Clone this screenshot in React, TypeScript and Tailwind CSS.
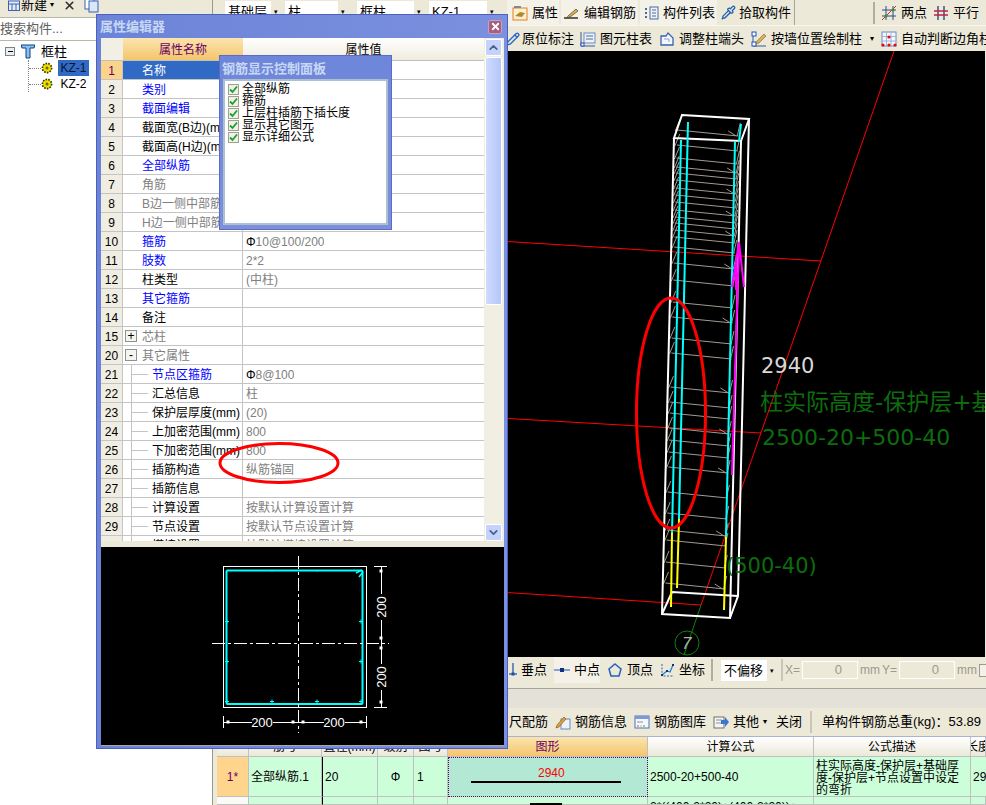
import React from "react";
import { ChevronDown, ChevronUp, Pipette, Pencil, X } from "lucide-react";

type Prop = {
  no: number;
  name: string;
  value?: string;
  tone?: "blue" | "black" | "gray";
  toggle?: "+" | "-";
  nested?: boolean;
};

const props: Prop[] = [
  { no: 1, name: "名称", tone: "black" },
  { no: 2, name: "类别", tone: "blue" },
  { no: 3, name: "截面编辑", tone: "blue" },
  { no: 4, name: "截面宽(B边)(mm)" },
  { no: 5, name: "截面高(H边)(mm)" },
  { no: 6, name: "全部纵筋", tone: "blue" },
  { no: 7, name: "角筋", tone: "gray" },
  { no: 8, name: "B边一侧中部筋", tone: "gray" },
  { no: 9, name: "H边一侧中部筋", tone: "gray" },
  { no: 10, name: "箍筋", tone: "blue", value: "Φ10@100/200" },
  { no: 11, name: "肢数", tone: "blue", value: "2*2" },
  { no: 12, name: "柱类型", value: "(中柱)" },
  { no: 13, name: "其它箍筋", tone: "blue" },
  { no: 14, name: "备注" },
  { no: 15, name: "芯柱", tone: "gray", toggle: "+" },
  { no: 20, name: "其它属性", tone: "gray", toggle: "-" },
  { no: 21, name: "节点区箍筋", tone: "blue", value: "Φ8@100", nested: true },
  { no: 22, name: "汇总信息", value: "柱", nested: true },
  { no: 23, name: "保护层厚度(mm)", value: "(20)", nested: true },
  { no: 24, name: "上加密范围(mm)", value: "800", nested: true },
  { no: 25, name: "下加密范围(mm)", value: "800", nested: true },
  { no: 26, name: "插筋构造", value: "纵筋锚固", nested: true },
  { no: 27, name: "插筋信息", nested: true },
  { no: 28, name: "计算设置", value: "按默认计算设置计算", nested: true },
  { no: 29, name: "节点设置", value: "按默认节点设置计算", nested: true },
  { no: 30, name: "搭接设置", value: "按默认搭接设置计算", nested: true },
];

const checks = ["全部纵筋", "箍筋", "上层柱插筋下插长度", "显示其它图元", "显示详细公式"];

const stirrups = [
  130, 145, 158, 167, 173, 180, 188, 195, 202, 210, 217, 223, 230, 237, 247, 263, 280,
  302, 317, 338, 353, 387, 402, 413, 428, 440, 452, 467, 492, 513, 530, 540, 562, 583,
];

const toneClass = { blue: "text-[#0000ff]", black: "text-black", gray: "text-[#808080]" };

function Gear({ className }: { className: string }) {
  return (
    <svg viewBox="0 0 12 12" className={className}>
      <circle cx="6" cy="6" r="4.6" fill="#e8e000" stroke="#303000" strokeWidth="1.6" strokeDasharray="1.6 1.2" />
      <circle cx="6" cy="6" r="1.5" fill="#806000" />
    </svg>
  );
}

// little toolbar drawings, all 16px
function Glyph({ kind }: { kind: string }) {
  const c = "h-4 w-4 shrink-0";
  switch (kind) {
    case "props":
      return (
        <svg viewBox="0 0 16 16" className={c}>
          <rect x="1" y="3" width="14" height="12" fill="#fdf0d0" stroke="#e08020" />
          <path d="M3 11l5-4 5 1-3 4z" fill="#b08830" />
          <rect x="2" y="1" width="7" height="2" fill="#888" />
        </svg>
      );
    case "edit":
      return (
        <svg viewBox="0 0 16 16" className={c}>
          <path d="M0 13h14" stroke="#202020" strokeWidth="1.4" />
          <path d="M4 11l8-7 2 2-8 6-3 1z" fill="#e0b050" stroke="#504020" strokeWidth=".7" />
        </svg>
      );
    case "list":
      return (
        <svg viewBox="0 0 16 16" className={c}>
          <rect x="7" y="2" width="8" height="12" fill="#eef2fa" stroke="#4a6a9a" />
          <path d="M9 5h4M9 8h4M9 11h4" stroke="#4a6a9a" />
          <path d="M2 3h2v2H2zM2 7h2v2H2zM2 11h2v2H2z" fill="#4a6a9a" />
        </svg>
      );
    case "two":
      return (
        <svg viewBox="0 0 16 16" className={c}>
          <path d="M5 1v14M12 1v14M1 5h14M1 11h14" stroke="#2a4a8a" />
          <path d="M1 15L15 1" stroke="#e02020" />
          <circle cx="5" cy="11" r="1.5" fill="#20a020" />
          <circle cx="12" cy="5" r="1.5" fill="#20a020" />
        </svg>
      );
    case "par":
      return (
        <svg viewBox="0 0 16 16" className={c}>
          <path d="M5 1v14M11 1v14" stroke="#2a4a8a" strokeWidth="1.4" />
          <path d="M1 6h14M1 10h14" stroke="#c02040" strokeWidth="1.4" />
        </svg>
      );
    case "table":
      return (
        <svg viewBox="0 0 16 16" className={c}>
          <rect x="4" y="2" width="11" height="10" fill="#eef2fa" stroke="#6a8ac0" />
          <path d="M6 5h7M6 8h7" stroke="#4a6a9a" />
          <path d="M1 1v14h14" fill="none" stroke="#3a5aa0" />
          <rect x="1" y="12" width="3" height="3" fill="#fff" stroke="#2050c0" />
        </svg>
      );
    case "trim":
      return (
        <svg viewBox="0 0 16 16" className={c}>
          <path d="M2 5h5l2-3 5 5v7H2z" fill="#f4f7ff" stroke="#3a62b0" strokeWidth="1.3" />
          <path d="M5 8h5v3" fill="none" stroke="#8aa4d8" />
        </svg>
      );
    case "wall":
      return (
        <svg viewBox="0 0 16 16" className={c}>
          <path d="M2 1v14h13" fill="none" stroke="#3a5aa0" />
          <rect x="1" y="1" width="4" height="4" fill="#fff" stroke="#2050c0" />
          <rect x="1" y="11" width="4" height="4" fill="#fff" stroke="#2050c0" />
          <path d="M6 10l7-7 2 2-7 7-3 1z" fill="#e0b050" stroke="#706040" strokeWidth=".6" />
        </svg>
      );
    case "auto":
      return (
        <svg viewBox="0 0 16 16" className={c}>
          <rect x="1" y="1" width="14" height="14" fill="#f4f7ff" stroke="#6a8ac0" />
          <path d="M5.5 1v14M10 1v14M1 5.5h14M1 10h14" stroke="#a0b4d8" />
          <circle cx="2" cy="14" r="1.6" fill="#e01010" />
          <circle cx="8" cy="14" r="1.6" fill="#e01010" />
          <circle cx="14" cy="14" r="1.6" fill="#e01010" />
          <circle cx="8" cy="6" r="1.6" fill="#e01010" />
        </svg>
      );
    case "drop":
      return (
        <svg viewBox="0 0 16 16" className={c}>
          <path d="M12 1v11" stroke="#3a62b0" strokeWidth="1.4" />
          <path d="M8 12h8" stroke="#3a62b0" strokeWidth="1.4" />
          <rect x="10.5" y="10.5" width="3" height="3" fill="#2050a0" />
        </svg>
      );
    case "mid":
      return (
        <svg viewBox="0 0 16 16" className={c}>
          <path d="M0 8h16" stroke="#5a82c8" strokeWidth="1.4" />
          <rect x="6" y="6" width="4" height="4" fill="#103080" />
        </svg>
      );
    case "vertex":
      return (
        <svg viewBox="0 0 16 16" className={c}>
          <path d="M8 2l6 5-2 7H4L2 7z" fill="none" stroke="#2060c0" strokeWidth="1.5" />
        </svg>
      );
    case "coord":
      return (
        <svg viewBox="0 0 16 16" className={c}>
          <path d="M3 2v12h12" fill="none" stroke="#3a62b0" strokeDasharray="2 1.4" />
          <path d="M3 13l5-4 3 1 3-7" fill="none" stroke="#2080d0" strokeWidth="1.3" />
          <path d="M13 2h2v2h-2zM2 12h2v2H2zM7 8h2v2H7z" fill="#103080" />
        </svg>
      );
    case "info":
      return (
        <svg viewBox="0 0 16 16" className={c}>
          <rect x="6" y="5" width="9" height="10" fill="#eef2fa" stroke="#6a8ac0" />
          <path d="M2 11l7-8 2 2-7 8-3 1z" fill="#e0a040" stroke="#705020" strokeWidth=".6" />
        </svg>
      );
    case "lib":
      return (
        <svg viewBox="0 0 16 16" className={c}>
          <rect x="1" y="2" width="14" height="12" fill="#f4f7ff" stroke="#4a72b8" />
          <rect x="1" y="2" width="14" height="3" fill="#7a9ad8" />
          <path d="M3 8h6" stroke="#909090" />
          <path d="M3 12h2" stroke="#e04040" />
          <path d="M6 12h2" stroke="#e0b040" />
          <path d="M9 12h2" stroke="#40a040" />
        </svg>
      );
    case "other":
      return (
        <svg viewBox="0 0 16 16" className={c}>
          <rect x="1" y="3" width="10" height="11" fill="#f4f4f4" stroke="#707070" />
          <path d="M3 6h6M3 9h5" stroke="#909090" />
          <path d="M8 6h4V3l4 5-4 5v-3H8z" fill="#3a78d0" />
        </svg>
      );
    default:
      return null;
  }
}

function ToolBtn({ kind, label, flat, className }: { kind: string; label: string; flat?: boolean; className?: string }) {
  return (
    <div className={`flex h-full shrink-0 items-center gap-[4px] ${flat ? "" : "bg-[#f4f2e8]"} ${className ?? ""}`}>
      <Glyph kind={kind} />
      <span className="whitespace-nowrap text-[13px] text-black">{label}</span>
    </div>
  );
}

function Combo({ label, className }: { label: string; className: string }) {
  return (
    <div className={`flex h-[21px] shrink-0 items-center justify-between bg-white pl-[3px] text-[13px] leading-none ${className}`}>
      <span className="whitespace-nowrap">{label}</span>
      <span className="flex h-full w-[10px] items-center justify-center bg-[#ece9d8] text-[7px]">▾</span>
    </div>
  );
}

function TreeRow({ label, active }: { label: string; active?: boolean }) {
  return (
    <div className="flex h-[16px] items-center">
      <span className="w-[12px] border-t border-dotted border-[#808080]" />
      <Gear className="h-[12px] w-[12px]" />
      <span
        className={`ml-[5px] w-[31px] text-center text-[12px] leading-[16px] ${active ? "bg-[#316ac5] text-[#0a1530]" : "text-black"}`}
      >
        {label}
      </span>
    </div>
  );
}

function LeftPanel() {
  return (
    <aside className="flex w-[213px] flex-col border-r border-[#9a9a8c]">
      <div className="flex h-[17px] items-center overflow-hidden bg-[#ece9d8] pb-[7px] pl-[8px] text-[13px]">
        <svg viewBox="0 0 12 12" className="h-[12px] w-[12px] shrink-0">
          <rect x=".5" y="2" width="11" height="9.5" fill="#e4ecf8" stroke="#3a62b0" />
          <path d="M.5 5h11M4 5v6M8 5v6" stroke="#3a62b0" />
        </svg>
        <span className="ml-[1px] whitespace-nowrap">新建</span>
        <span className="ml-[3px] text-[8px]">▾</span>
        <X className="ml-[9px] h-[13px] w-[13px] shrink-0" strokeWidth={3} color="#303030" />
        <svg viewBox="0 0 16 16" className="ml-[7px] h-[16px] w-[16px] shrink-0">
          <rect x="2" y="1" width="9" height="11" fill="#fff" stroke="#3a62b0" />
          <rect x="6" y="4" width="9" height="11" fill="#dbe6fa" stroke="#3a62b0" />
        </svg>
      </div>
      <div className="flex h-[24px] items-center border-y border-[#b8b8a8] bg-white text-[13px] text-[#606060]">
        搜索构件...
      </div>
      <div className="flex-1 bg-white pl-[5px] pt-[2px]">
        <div className="flex h-[17px] items-center">
          <span className="flex h-[9px] w-[10px] items-center justify-center border border-[#808080] bg-[#e8eef4]">
            <span className="h-[1px] w-[5px] bg-black" />
          </span>
          <svg viewBox="0 0 14 15" className="ml-[6px] h-[15px] w-[14px]">
            <path d="M0 1h14l-1 3H9v10H5V4H1z" fill="#8ac0f0" stroke="#104080" />
          </svg>
          <span className="ml-[6px] text-[13px]">框柱</span>
        </div>
        <div className="ml-[23px] border-l border-dotted border-[#808080]">
          <TreeRow label="KZ-1" active />
          <TreeRow label="KZ-2" />
        </div>
      </div>
    </aside>
  );
}

function Canvas3D() {
  const xl = (y: number) => 675 - (y - 138) * 0.026;
  const xr = (y: number) => 741 - (y - 138) * 0.03;
  return (
    <svg viewBox="217 51 769 606" className="block h-[606px] w-[769px] bg-black">
      {/* grid axes */}
      <g stroke="#ff0000" strokeWidth="1" fill="none">
        <path d="M500 241L822 261" />
        <path d="M500 418L762 433" />
        <path d="M500 592L702 605" />
        <path d="M895 51L702 605" />
      </g>
      <path d="M702 605L685 655" stroke="#108010" fill="none" />
      <circle cx="688" cy="643" r="12" stroke="#108010" fill="none" />
      <text x="683" y="649" fontSize="17" fill="#b0b0b0" fontStyle="italic">
        7
      </text>

      {/* stirrups */}
      <g stroke="#a39a90" strokeWidth="1" fill="none">
        {stirrups.map((y, i) => (
          <path
            key={y}
            d={`M${xl(y) + 3} ${y}L${xr(y) - 2} ${y + 6}M${xl(y) + 1} ${y + 1}L${xl(y) + 6} ${y - 11}M${xr(y) - 3} ${y + 6}L${xr(y)} ${y - 7}${
              i % 3 === 0 ? `M${xr(y) - 12} ${y + 1}L${xr(y) - 4} ${y + 6}` : ""
            }`}
          />
        ))}
      </g>

      {/* concrete outline */}
      <g stroke="#ffffff" strokeWidth="2" fill="none">
        <path d="M683 115L750 119L742 141L675 138Z" />
        <path d="M675 138L663 614L731 618L742 141" />
        <path d="M750 119L739 596L731 618" />
        <path d="M663 614L673 592L739 596" />
      </g>

      {/* bars */}
      <g strokeWidth="2" fill="none" strokeLinecap="butt">
        <path d="M682 140L673 533" stroke="#00ffff" />
        <path d="M689 122L680 519" stroke="#00ffff" />
        <path d="M736 142L727 537" stroke="#00ffff" />
        <path d="M742 124L740 142" stroke="#00ffff" />
        <path d="M673 533L672 607" stroke="#ffff00" />
        <path d="M680 519L678 588" stroke="#ffff00" />
        <path d="M727 537L725 610" stroke="#ffff00" />
        <path d="M740 242L733 475" stroke="#ff00ff" />
        <path d="M740 242L733 287M740 242L745 287M737 262L737 290" stroke="#ff00ff" />
      </g>

      <ellipse cx="672" cy="413" rx="34.5" ry="115" stroke="#ff0000" strokeWidth="3" fill="none" />

      <g className="font-['DejaVu_Sans','Noto_Sans_CJK_SC',sans-serif]">
        <text x="762" y="373" fontSize="21" fill="#d8d8d8">
          2940
        </text>
        <text x="761" y="410" fontSize="23" fill="#0d6d0d">
          柱实际高度-保护层+基础厚度
        </text>
        <text x="763" y="445" fontSize="22" fill="#0d6d0d">
          2500-20+500-40
        </text>
        <text x="727" y="573" fontSize="21" fill="#0d6d0d">
          (500-40)
        </text>
      </g>
    </svg>
  );
}

function SectionPreview() {
  const nodes: [number, number][] = [
    [381, 571], [381, 638], [381, 648], [381, 702],
    [228, 722], [293, 722], [303, 722], [361, 722],
  ];
  const bars: [number, number][] = [
    [227, 621], [227, 661], [361, 621], [361, 661], [272, 701], [317, 701], [227, 701], [361, 701],
  ];
  return (
    <svg viewBox="101 547 403 198" className="block h-[198px] w-[403px] bg-black">
      <rect x="223.5" y="566.5" width="143" height="141" fill="none" stroke="#fff" />
      <rect x="226.5" y="570.5" width="136" height="133.5" rx="1" fill="none" stroke="#00ffff" strokeWidth="2" />
      <path d="M356 573L362 570M359 577L363 572" stroke="#00ffff" strokeWidth="1.6" />
      {bars.map(([x, y]) => (
        <path key={`${x}-${y}`} d={`M${x - 2} ${y + 0.5}h4M${x} ${y - 1.5}v4`} stroke="#00ffff" />
      ))}
      <path d="M272 570v1.5M317 570v1.5" stroke="#00ffff" />
      <path d="M298.5 556V733" stroke="#fff" strokeDasharray="13 3 3 3" />
      <path d="M212 643.5H389" stroke="#fff" strokeDasharray="13 3 3 3" />
      <g stroke="#fff" fill="none">
        <path d="M374 566.5h13M374 707.5h13M381.5 566V594M381.5 620V664M381.5 690V707" />
        <path d="M223.5 716v12M366.5 716v12M223 722.5H252M273 722.5H324M345 722.5H367" />
      </g>
      {nodes.map(([x, y]) => (
        <rect key={`${x}-${y}`} x={x - 1.5} y={y - 1.5} width="3" height="3" fill="#fff" />
      ))}
      <g fill="#fff" fontSize="13" textAnchor="middle">
        <text x="262" y="727">200</text>
        <text x="334" y="727">200</text>
        <text transform="translate(386 607) rotate(-90)">200</text>
        <text transform="translate(386 677) rotate(-90)">200</text>
      </g>
    </svg>
  );
}

function ScrollButton({ up }: { up?: boolean }) {
  const Icon = up ? ChevronUp : ChevronDown;
  return (
    <div className="flex h-[17px] w-[17px] items-center justify-center rounded-[2px] border border-white bg-[#c3d3fd]">
      <Icon className="h-[13px] w-[13px]" strokeWidth={3.2} color="#4d6185" />
    </div>
  );
}

function PropValue({ value }: { value?: string }) {
  if (!value) return null;
  // the steel grade sign is black, the rest of the value stays grey
  if (value.startsWith("Φ")) {
    return (
      <>
        <span className="text-black">Φ</span>
        {value.slice(1)}
      </>
    );
  }
  return <>{value}</>;
}

function PropertyWindow() {
  return (
    <section className="absolute left-[96px] top-[14px] flex h-[735px] w-[412px] flex-col border border-[#4d60c0] bg-gradient-to-r from-[#6c84d8] to-[#7b90de] pb-[3px] pl-[4px] pr-[3px]">
      <header className="flex h-[23px] shrink-0 items-center justify-between">
        <span className="-ml-[1px] text-[13px] font-bold text-[#c8d8f4]">属性编辑器</span>
        <span className="mr-[2px] flex h-[14px] w-[14px] items-center justify-center rounded-[2px] border border-[#c8a0c0] bg-[#a86080]">
          <X className="h-[11px] w-[11px]" strokeWidth={4} color="#fff" />
        </span>
      </header>

      <div className="flex h-[503px] shrink-0 overflow-hidden bg-white">
        <div className="h-[503px] flex-1 overflow-hidden">
          <div className="flex h-[23px] border-b border-[#c0c0c0]">
            <div className="w-[22px] bg-[#f2efe4]" />
            <div className="flex w-[120px] items-center justify-center bg-gradient-to-b from-[#fbe4ae] to-[#f4c56c] pt-[2px] text-[#660066]">
              属性名称
            </div>
            <div className="flex flex-1 items-center justify-center bg-gradient-to-b from-white to-[#efecde] pt-[2px]">
              属性值
            </div>
          </div>
          {props.map((p) => (
            <div key={p.no} className="flex h-[19px] border-b border-[#c4c4c4] leading-[18px]">
              <div
                className={`w-[22px] shrink-0 border-r border-[#c4c4c4] pt-[1px] text-center ${p.no === 1 ? "bg-[#fbd48c] text-[#660066]" : "bg-[#f0ede2]"}`}
              >
                {p.no}
              </div>
              <div
                className={`relative flex w-[120px] shrink-0 items-center border-r border-[#c4c4c4] pl-[19px] pt-[2px] ${p.no === 1 ? "bg-[#316ac5]" : ""}`}
              >
                {p.toggle && (
                  <span className="absolute left-[2px] top-[3px] flex h-[12px] w-[12px] items-center justify-center border border-[#909090] bg-[#f4f4f0] text-[12px] leading-none">
                    {p.toggle}
                  </span>
                )}
                {p.nested && (
                  <>
                    <span className="absolute bottom-0 left-[8px] top-0 border-l border-[#c4c4c4]" />
                    <span className="absolute left-[8px] top-[9px] w-[17px] border-t border-[#c4c4c4]" />
                  </>
                )}
                <span
                  className={`whitespace-nowrap ${p.nested ? "ml-[10px]" : ""} ${p.no === 1 ? "text-white" : toneClass[p.tone ?? "black"]}`}
                >
                  {p.name}
                </span>
              </div>
              <div className="overflow-hidden whitespace-nowrap pl-[3px] pt-[1px] text-[#808080]">
                <PropValue value={p.value} />
              </div>
            </div>
          ))}
        </div>
        <div className="flex w-[20px] shrink-0 flex-col justify-between bg-[#f1efe2] pl-[1px] pr-[2px] pt-[1px]">
          <div>
            <ScrollButton up />
            <div className="mt-[1px] h-[248px] w-[17px] rounded-[2px] border border-white bg-gradient-to-r from-[#cfdcff] to-[#b4c6f8]" />
          </div>
          <ScrollButton />
        </div>
      </div>

      <div className="h-[6px] shrink-0 bg-[#ece9d8]" />
      <div className="border-b border-[#aaa89c]">
        <SectionPreview />
      </div>
      {/* marker drawn on the screenshot */}
      <svg viewBox="0 0 124 44" className="absolute left-[120px] top-[426px] h-[44px] w-[124px]">
        <ellipse cx="62" cy="22" rx="59" ry="19.5" stroke="#ff0000" strokeWidth="3" fill="none" />
      </svg>
    </section>
  );
}

function RebarPanel() {
  return (
    <section className="absolute left-[219px] top-[55px] flex h-[175px] w-[173px] flex-col border border-[#5a6cc8] bg-gradient-to-b from-[#6e86da] to-[#7c90dc] px-[3px] pb-[4px]">
      <div className="-ml-[1px] flex h-[23px] shrink-0 items-center whitespace-nowrap pt-[2px] text-[13px] font-bold text-[#c8d8f4]">
        钢筋显示控制面板
      </div>
      <div className="flex-1 border-2 border-[#aec0d0] bg-white pl-[3px] pt-[2px]">
        {checks.map((c) => (
          <div key={c} className="flex h-[12px] items-center gap-[3px] text-[12px] leading-[12px]">
            <span className="flex h-[11px] w-[11px] shrink-0 items-center justify-center border border-[#a0a090] bg-[#f0f0e6]">
              <svg viewBox="0 0 9 9" className="h-[9px] w-[9px]">
                <path d="M1 4.5L3.5 7L8 1.5" fill="none" stroke="#18a030" strokeWidth="1.8" />
              </svg>
            </span>
            <span className="whitespace-nowrap">{c}</span>
          </div>
        ))}
      </div>
    </section>
  );
}

function BottomTable() {
  const head = ["", "筋号", "直径(mm)", "级别", "图号", "图形", "计算公式", "公式描述", "长度"];
  const cols = "grid grid-cols-[32px_73px_56px_36px_34px_200px_166px_157px_1fr]";
  const cell = "border-r border-b border-[#c0c0c0]";
  return (
    <div className="ml-[1px] overflow-hidden bg-white text-[12px]">
      <div className={`${cols} h-[20px]`}>
        {head.map((h, i) => (
          <div
            key={i}
            className={`flex items-center justify-center overflow-hidden whitespace-nowrap border-b border-r border-[#c0c0c0] ${
              i === 5
                ? "bg-gradient-to-b from-[#fbe4ae] to-[#f4c56c] text-[#660066]"
                : "bg-gradient-to-b from-white to-[#ece9da]"
            }`}
          >
            {h}
          </div>
        ))}
      </div>
      <div className={`${cols} h-[40px] bg-[#ccffd9]`}>
        <div className={`${cell} flex items-center justify-center bg-[#ffd48c] text-[#660066]`}>1*</div>
        <div className={`${cell} flex items-center overflow-hidden whitespace-nowrap pl-[2px]`}>全部纵筋.1</div>
        <div className={`${cell} flex items-center border-l border-l-black pl-[2px]`}>20</div>
        <div className={`${cell} flex items-center justify-center`}>Φ</div>
        <div className={`${cell} flex items-center pl-[3px]`}>1</div>
        <div className="relative border border-dotted border-[#660066] bg-[#b3e8d4]">
          <span className="absolute left-[89px] top-[9px] text-[12px] leading-none text-[#ff0000]">2940</span>
          <span className="absolute left-[22px] top-[23px] h-[2px] w-[150px] bg-black" />
        </div>
        <div className={`${cell} flex items-center pl-[2px]`}>2500-20+500-40</div>
        <div className={`${cell} pl-[2px] pt-[3px] leading-[12px]`}>柱实际高度-保护层+基础厚度-保护层+节点设置中设定的弯折</div>
        <div className={`${cell} flex items-center pl-[2px]`}>2940</div>
      </div>
      <div className={`${cols} h-[8px] bg-[#ccffd9]`}>
        <div className={`${cell} bg-[#fbfaf4]`} />
        <div className={cell} />
        <div className={`${cell} border-l border-l-black`} />
        <div className={cell} />
        <div className={cell} />
        <div className={`${cell} relative`}>
          <span className="absolute left-[82px] top-[6px] h-[2px] w-[32px] bg-black" />
        </div>
        <div className={`${cell} overflow-hidden whitespace-nowrap pl-[2px] pt-[3px] leading-[14px]`}>2*((400-2*20)+(400-2*20))+</div>
        <div className={cell} />
        <div className={cell} />
      </div>
    </div>
  );
}

function Workspace() {
  return (
    <div className="ml-[3px] flex flex-1 flex-col overflow-hidden">
      {/* layer + element pickers */}
      <div className="flex h-[26px] items-center border-b border-[#f8f6ee] pl-[9px]">
        <Combo label="基础层" className="mb-[3px] w-[56px]" />
        <Combo label="柱" className="mb-[3px] ml-[4px] w-[63px]" />
        <Combo label="框柱" className="mb-[3px] ml-[9px] w-[67px]" />
        <Combo label="KZ-1" className="mb-[3px] ml-[5px] w-[68px]" />
        <div className="ml-[10px] flex h-full shrink-0 items-center gap-[2px] border-r border-[#a8a698] pr-[3px]">
          <ToolBtn kind="props" label="属性" className="w-[52px] pl-[5px]" />
          <ToolBtn kind="edit" label="编辑钢筋" className="w-[77px] pl-[3px]" />
          <ToolBtn kind="list" label="构件列表" className="w-[77px] pl-[3px]" />
          <div className="flex h-full items-center gap-[3px] pl-[2px]">
            <Pipette className="h-[15px] w-[15px]" color="#1f62b8" strokeWidth={2.2} />
            <span className="whitespace-nowrap text-[13px]">拾取构件</span>
          </div>
        </div>
        <div className="ml-[78px] mr-[6px] h-[22px] w-[2px] shrink-0 bg-[#b0ae9e]" />
        <ToolBtn kind="two" label="两点" flat />
        <ToolBtn kind="par" label="平行" flat className="ml-[6px]" />
      </div>

      <div className="flex h-[25px] items-center pl-[290px]">
        <Pencil className="h-[14px] w-[14px] shrink-0" color="#2b6ac8" strokeWidth={2.4} />
        <span className="ml-[2px] whitespace-nowrap text-[13px]">原位标注</span>
        <ToolBtn kind="table" label="图元柱表" flat className="ml-[6px]" />
        <ToolBtn kind="trim" label="调整柱端头" flat className="ml-[7px]" />
        <ToolBtn kind="wall" label="按墙位置绘制柱" flat className="ml-[7px]" />
        <span className="ml-[8px] text-[8px]">▾</span>
        <ToolBtn kind="auto" label="自动判断边角柱" flat className="ml-[7px]" />
      </div>

      <Canvas3D />

      {/* snap + offset bar */}
      <div className="flex h-[26px] items-center pl-[285px] text-[13px]">
        <ToolBtn kind="drop" label="垂点" flat />
        <ToolBtn kind="mid" label="中点" className="ml-[7px]" />
        <ToolBtn kind="vertex" label="顶点" flat className="ml-[7px]" />
        <ToolBtn kind="coord" label="坐标" flat className="ml-[6px]" />
        <div className="ml-[6px] mr-[8px] h-[22px] w-[2px] shrink-0 bg-[#b0ae9e]" />
        <Combo label="不偏移" className="w-[56px]" />
        <div className="ml-[4px] h-[22px] w-[2px] shrink-0 bg-[#c8c6b6]" />
        <div className="ml-[2px] flex shrink-0 items-center text-[#9c9a8c]">
          <span className="w-[17px] text-[12px]">X=</span>
          <span className="h-[18px] w-[56px] border border-white pr-[15px] text-right leading-[16px]">0</span>
          <span className="ml-[2px] w-[22px] text-[12px]">mm</span>
          <span className="w-[17px] text-[12px]">Y=</span>
          <span className="h-[18px] w-[56px] border border-white pr-[15px] text-right leading-[16px]">0</span>
          <span className="ml-[2px] w-[17px] text-[12px]">mm</span>
        </div>
        <span className="ml-[5px] h-[13px] w-[13px] shrink-0 border border-[#9c9a8c] bg-[#f4f2e8]" />
      </div>

      <div className="h-[6px] border-b border-[#a8a698]" />
      <div className="h-[19px] bg-[#e4e2d8]" />

      <div className="flex h-[29px] items-center border-b border-[#a8b4d0] pl-[293px] text-[13px]">
        <span className="whitespace-nowrap">尺配筋</span>
        <ToolBtn kind="info" label="钢筋信息" flat className="ml-[7px]" />
        <ToolBtn kind="lib" label="钢筋图库" flat className="ml-[7px]" />
        <ToolBtn kind="other" label="其他" flat className="ml-[7px]" />
        <span className="ml-[4px] text-[8px]">▾</span>
        <span className="ml-[9px] shrink-0 whitespace-nowrap">关闭</span>
        <div className="ml-[8px] h-[22px] w-[2px] shrink-0 bg-[#c8c6b6]" />
        <span className="ml-[10px] whitespace-nowrap">单构件钢筋总重(kg)：53.89</span>
      </div>

      <BottomTable />
    </div>
  );
}

export default function App() {
  return (
    <div className="relative flex h-[805px] w-[986px] overflow-hidden bg-[#ece9d8] font-['Liberation_Sans','Noto_Sans_CJK_SC',sans-serif] text-[12px] text-black">
      <LeftPanel />
      <Workspace />
      <PropertyWindow />
      <RebarPanel />
    </div>
  );
}
